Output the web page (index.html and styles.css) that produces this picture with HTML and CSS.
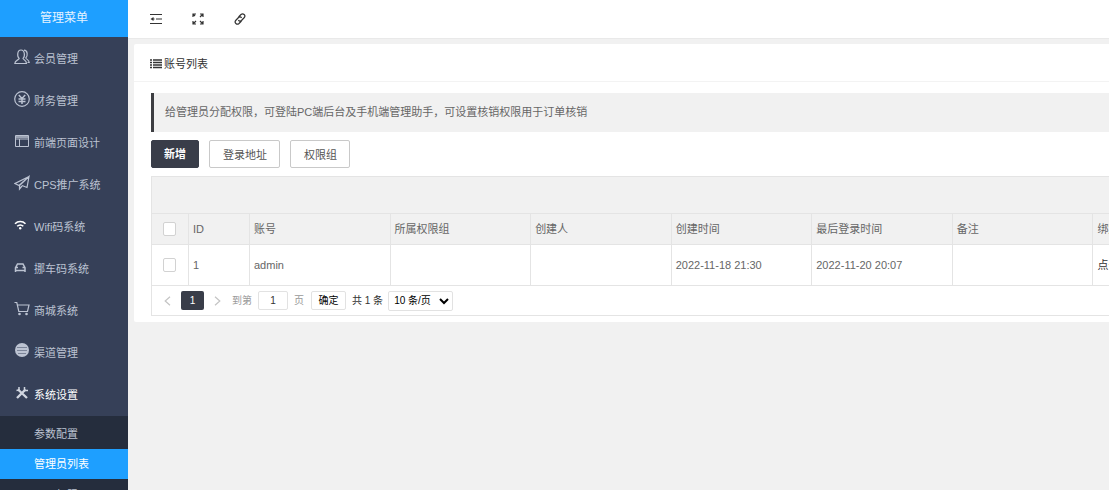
FILE: index.html
```html
<!DOCTYPE html>
<html lang="zh-CN">
<head>
<meta charset="utf-8">
<title>账号列表</title>
<link rel="stylesheet" href="styles.css">
</head>
<body>
<div class="app">
  <aside class="sidebar">
    <h1 class="brand">管理菜单</h1>
    <nav class="menu">
      <a class="item" href="#"><svg class="icon" viewBox="0 0 16 16"><path stroke-width="1.200" d="M5.200 9.500C3 8 3 1 7 1s4.200 7 2 8.500c.3 1.500 3.500 1.500 3.500 5H.8c0-3.500 4.200-3.500 4.400-5zM10 1.200c4 0 3.800 6 1.800 7.800.3 1.500 3.200 1.500 3.400 4.500H13.500"/></svg>会员管理</a>
      <a class="item" href="#"><svg class="icon" viewBox="0 0 16 16"><circle cx="8" cy="8" r="7.300" stroke-width="1.200"/><path stroke-width="1.500" d="M4.800 4 8 7.500 11.200 4M8 7.500V13M4.500 8h7M4.500 10.500h7"/></svg>财务管理</a>
      <a class="item" href="#"><svg class="icon" viewBox="0 0 16 16"><path d="M1.500 2.500h13v11h-13zM1.500 6h13M5.500 6v7.500"/><path stroke-width="1.500" d="M2 4h12"/></svg>前端页面设计</a>
      <a class="item" href="#"><svg class="icon" viewBox="0 0 16 16"><path stroke-width="1.200" d="M15 1.500 1 8.500l4 2L15 1.500l-2 11-5-2M15 1.500l-9.500 9V14l2.500-3"/></svg>CPS推广系统</a>
      <a class="item" href="#"><svg class="icon bright" viewBox="0 0 16 16"><path stroke-width="1.600" d="M1 6.800c3-3 7.500-3 10.500 0M3.200 9.300c1.800-1.800 4.300-1.800 6.100 0"/><circle class="solid" cx="6.200" cy="11.300" r="1.200"/></svg>Wifi码系统</a>
      <a class="item" href="#"><svg class="icon" viewBox="0 0 16 16"><path stroke-width="1.500" d="M1.500 13V8.700L3.500 5h5.500l2 3.700V13M1.500 11.500h9.500M2 8.500h2M8.500 8.500h2"/></svg>挪车码系统</a>
      <a class="item" href="#"><svg class="icon" viewBox="0 0 16 16"><path stroke-width="1.200" d="M.5 1.500h2.300l2 9h8.700l1.500-6.500H3.500"/><circle class="solid" cx="5.500" cy="13" r="1.300"/><circle class="solid" cx="12.500" cy="13" r="1.300"/></svg>商城系统</a>
      <a class="item" href="#"><svg class="icon" viewBox="0 0 16 16"><circle class="solid" cx="8" cy="7" r="7"/><path class="cut" d="M3 4.500h10M3 7.500h10M4 10.500h8"/></svg>渠道管理</a>
      <a class="item current" href="#"><svg class="icon" viewBox="0 0 16 16"><path stroke-width="2.400" d="M4 4.500 13 13M3 13 11.500 4.500"/><path stroke-width="1.500" d="M10.500 2v3.500h3.500M2.500 5.500 5 5V2"/></svg>系统设置</a>
    </nav>
    <nav class="submenu">
      <a class="sub" href="#">参数配置</a>
      <a class="sub active" href="#">管理员列表</a>
      <a class="sub next" href="#">页面权限</a>
    </nav>
  </aside>
  <div class="main">
    <header class="topbar">
      <button class="tool" aria-label="收起菜单"><svg viewBox="0 0 12 12"><path d="M0 1.500h12M6 6h6M0 10.500h12"/><path class="fill" d="M3.500 4v4L.5 6z"/><path d="M3 6h1.500"/></svg></button>
      <button class="tool" aria-label="全屏"><svg viewBox="0 0 12 12"><path d="M1 4V1h3M8 1h3v3M11 8v3H8M4 11H1V8M1 11l3-3M8 8l3 3M8 4l3-3M1 1l2 2"/></svg></button>
      <button class="tool" aria-label="链接"><svg viewBox="0 0 12 12"><path d="M4.500 4 7 1.500c2.200-2 5 1 3.300 3L7.500 7.500c-1 1-2.700.8-3-.5M7.500 8l-2.500 2.500c-2.200 2-5-1-3.300-3l2.800-3c1-1 2.700-.8 3 .5"/></svg></button>
    </header>
    <main class="card">
      <h2 class="card-title"><svg viewBox="0 0 12 10"><path d="M0 1h2M3 1h9M0 3.500h2M3 3.500h9M0 6h2M3 6h9M0 8.500h2M3 8.500h9"/></svg>账号列表</h2>
      <div class="card-body">
        <p class="notice">给管理员分配权限，可登陆PC端后台及手机端管理助手，可设置核销权限用于订单核销</p>
        <div class="actions">
          <button class="btn primary">新增</button>
          <button class="btn">登录地址</button>
          <button class="btn">权限组</button>
        </div>
        <div class="grid">
          <div class="grid-tools"></div>
          <table>
            <colgroup><col class="c-check"><col class="c-id"><col><col><col><col><col><col><col></colgroup>
            <thead><tr><th><input type="checkbox" aria-label="全选"></th><th>ID</th><th>账号</th><th>所属权限组</th><th>创建人</th><th>创建时间</th><th>最后登录时间</th><th>备注</th><th>绑定微信</th></tr></thead>
            <tbody><tr><td><input type="checkbox" aria-label="选择 admin"></td><td>1</td><td>admin</td><td></td><td></td><td>2022-11-18 21:30</td><td>2022-11-20 20:07</td><td></td><td class="link">点击绑定</td></tr></tbody>
          </table>
          <div class="pager">
            <button class="arrow" aria-label="上一页"><svg viewBox="0 0 8 10"><path d="M6.500 1.500 2.500 5l4 3.500"/></svg></button>
            <button class="page">1</button>
            <button class="arrow" aria-label="下一页"><svg viewBox="0 0 8 10"><path d="M1.500 1.500 5.500 5l-4 3.500"/></svg></button>
            <label class="jump">到第<input type="text" value="1">页</label>
            <button class="go">确定</button>
            <span class="total">共 1 条</span>
            <select aria-label="每页条数"><option>10 条/页</option></select>
          </div>
        </div>
      </div>
    </main>
  </div>
</div>
</body>
</html>
```
FILE: styles.css
```css
* { box-sizing: border-box; }
body {
  margin: 0;
  overflow: hidden;
  background: #f1f1f1;
  color: #666;
  font: 11px/16px "Liberation Sans", "Noto Sans CJK SC", sans-serif;
}
button, input, select { font: inherit; color: inherit; margin: 0; }
a { color: inherit; text-decoration: none; }
svg { fill: none; stroke: currentColor; display: block; flex: none; }
.app { display: flex; height: 100vh; }
.sidebar { width: 128px; flex: none; background: #364058; color: #bcc3d2; overflow: hidden; }
.brand {
  margin: 0;
  height: 37px;
  background: #1e9fff;
  color: #e4f3ff;
  font-size: 12px;
  font-weight: 400;
  line-height: 37px;
  text-align: center;
}
.item { display: flex; align-items: center; gap: 4px; height: 42px; padding: 2px 0 0 14px; }
.icon { width: 16px; height: 16px; margin-bottom: 4px; }
.solid { fill: currentColor; stroke: none; }
.cut { stroke: #7b8498; }
.bright, .current { color: #fff; }
.current .icon { color: #d0d5df; }
.submenu { background: #252d3d; padding-top: 4px; margin-top: 1px; height: 100%; }
.sub { display: block; padding-left: 34px; line-height: 30px; }
.sub:first-child { line-height: 29px; }
.sub.active { background: #1e9fff; color: #fff; }
.sub.next { padding-top: 1px; }
.main { flex: 1; min-width: 0; }
.topbar {
  display: flex;
  gap: 30px;
  align-items: center;
  height: 39px;
  padding-left: 22px;
  background: #fff;
  border-bottom: 1px solid #e9e9e9;
}
.tool { padding: 0; border: 0; background: none; color: #333; }
.tool svg { width: 12px; height: 12px; stroke-width: 1.2; }
.fill { fill: currentColor; stroke: none; }
.card { margin: 5px 0 0 6px; background: #fff; border-radius: 2px 0 0 2px; }
.card-title {
  display: flex;
  align-items: center;
  gap: 2px;
  height: 38px;
  margin: 0;
  padding: 2px 0 0 16px;
  border-bottom: 1px solid #f3f3f3;
  color: #333;
  font-size: 11px;
  font-weight: 400;
}
.card-title svg { width: 12px; height: 10px; stroke-width: 1.4; }
.card-body { padding: 11px 0 6px 17px; overflow: hidden; }
.notice { margin: 0 0 8px; padding: 11px 11px 12px; border-left: 3px solid #3d3e42; background: #f1f1f1; }
.actions { display: flex; gap: 10px; margin-bottom: 8px; }
.btn {
  height: 28px;
  padding: 1px 12px 0 13px;
  border: 1px solid #c9c9c9;
  border-radius: 2px;
  background: #fff;
  color: #555;
}
.primary { padding: 0 12px; border-color: #393d49; background: #393d49; color: #fff; font-weight: 700; }
.grid { border: 1px solid #e4e4e4; border-right: 0; }
.grid-tools { height: 37px; background: #f1f1f1; border-bottom: 1px solid #e4e4e4; }
table { width: 1082px; table-layout: fixed; border-collapse: separate; border-spacing: 0; }
.c-check { width: 37px; }
.c-id { width: 61px; }
th, td {
  height: 31px;
  padding: 0 4px;
  border-right: 1px solid #e4e4e4;
  border-bottom: 1px solid #e4e4e4;
  font-weight: 400;
  text-align: left;
  white-space: nowrap;
}
th { background: #f1f1f1; }
td { height: 41px; }
.link { color: #333; }
th:first-child, td:first-child { padding-left: 11px; }
input[type="checkbox"] {
  appearance: none;
  display: block;
  width: 13px;
  height: 14px;
  border: 1px solid #d2d2d2;
  border-radius: 2px;
  background: #fff;
}
.pager { display: flex; align-items: center; height: 29px; padding: 0 0 0 10px; font-size: 10px; color: #333; }
.arrow { padding: 0; border: 0; background: none; color: #c4c4c4; }
.arrow svg { width: 10px; height: 12px; }
.page { width: 23px; height: 19px; margin: 0 9px; padding: 0; border: 0; border-radius: 2px; background: #393d49; color: #fff; }
.jump { display: flex; align-items: center; gap: 6px; margin: 0 7px 0 9px; color: #999; }
.jump input { width: 30px; height: 19px; padding: 0; border: 1px solid #e2e2e2; border-radius: 2px; text-align: center; color: #333; }
.go { width: 35px; height: 19px; padding: 0; border: 1px solid #e2e2e2; border-radius: 2px; background: #fff; color: #000; }
.total { margin: 0 5px 0 6px; }
select { width: 65px; height: 20px; padding: 0 1px; border: 1px solid #e2e2e2; border-radius: 2px; background: #fff; color: #000; }
```
